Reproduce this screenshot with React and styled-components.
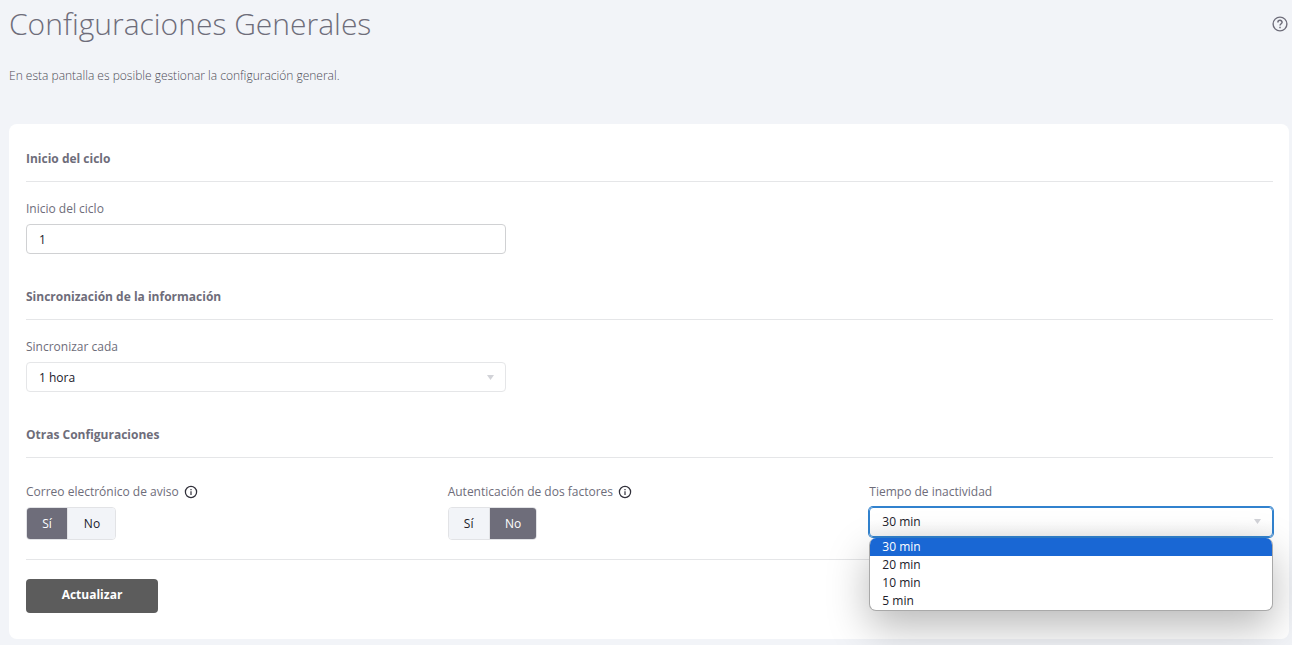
import React from "react";
import styled, { createGlobalStyle } from "styled-components";

const Global = createGlobalStyle`
  *, *::before, *::after { box-sizing: border-box; }
  body {
    margin: 0;
    background: #f2f4f8;
    color: #6e6d7a;
    font: 400 12px/18px "Open Sans", sans-serif;
  }
`;

const Page = styled.div`
  height: 645px;
  padding: 0 3px 0 9px;
  overflow: hidden;
`;

const Header = styled.header`
  display: flex;
  justify-content: space-between;
  height: 124px;
  padding-top: 4px;
`;

const Title = styled.h1`
  margin: 0;
  font-size: 30px;
  font-weight: 300;
  line-height: 40px;
  white-space: nowrap;
`;

const Intro = styled.p`
  margin: 23px 0 0;
  font-weight: 300;
  color: #4d4c57;
`;

const HelpIcon = styled.svg`
  width: 16px;
  height: 16px;
  margin: 12px 1px 0 0;
`;

const Card = styled.main`
  height: 515px;
  padding: 18px 16px 26px 17px;
  background: #fff;
  border-radius: 8px;
`;

const Section = styled.section`
  height: ${(p) => (p.$last ? "auto" : "138px")};
`;

const SectionTitle = styled.h2`
  height: 40px;
  margin: 0 0 ${(p) => p.$gap || 18}px;
  font-size: 12px;
  font-weight: 700;
  line-height: 34px;
  border-bottom: 1px solid #e5e6e8;
`;

const Label = styled.div`
  display: flex;
  align-items: center;
  height: 18px;
  margin-bottom: 6px;
  font-size: 12px;
  white-space: nowrap;
`;

const InfoIcon = styled.svg`
  width: 14px;
  height: 14px;
  margin-left: 5px;
`;

const Control = styled.div`
  position: relative;
  display: flex;
  align-items: center;
  justify-content: space-between;
  width: ${(p) => p.$width || "480px"};
  height: 30px;
  padding: ${(p) => (p.$focused ? 0 : 2)}px 11px 0 12px;
  color: #20202a;
  background: ${(p) => (p.$focused ? "linear-gradient(#fff 45%, #f4f4f4)" : "#fff")};
  border: 1px solid ${(p) => (p.$strong ? "#d0d1d3" : "#e5e6e8")};
  border-radius: 4px;
  ${(p) => p.$focused && "border-color: #3182ce; box-shadow: 0 0 0 1px #3182ce;"}
`;

const Caret = styled.svg`
  width: 7px;
  height: 5px;
  margin-bottom: 1px;
`;

const Columns = styled.div`
  display: grid;
  grid-template-columns: repeat(3, 1fr);
  column-gap: 18px;
  height: 57px;
`;

const Toggle = styled.div`
  display: inline-flex;
  height: 33px;
  border: 1px solid #e2e3e6;
  border-radius: 4px;
  overflow: hidden;
`;

const Option = styled.div`
  display: flex;
  align-items: center;
  justify-content: center;
  width: ${(p) => p.$width}px;
  color: ${(p) => (p.$on ? "#fff" : "#20202a")};
  background: ${(p) => (p.$on ? "#6e6d7a" : "#f2f4f8")};
  & + & { padding-left: 1px; border-left: 1px solid #e2e3e6; }
`;

const Menu = styled.ul`
  position: absolute;
  top: 30px;
  left: 0;
  right: 0;
  height: 73px;
  margin: 0 -1px;
  padding: 0;
  list-style: none;
  background: #fff;
  border: 1px solid #a9a9a9;
  border-top: 0;
  border-radius: 7px;
  overflow: hidden;
  box-shadow: 0 16px 42px rgba(0, 0, 0, 0.28);
`;

const MenuItem = styled.li`
  height: 18px;
  padding-left: 12px;
  line-height: 18px;
  color: ${(p) => (p.$selected ? "#fff" : "#20202a")};
  background: ${(p) => (p.$selected ? "#1967d4" : "transparent")};
`;

const Footer = styled.footer`
  margin-top: 19px;
  padding-top: 19px;
  border-top: 1px solid #e5e6e8;
`;

const Submit = styled.button`
  display: block;
  width: 132px;
  height: 34px;
  padding: 0 0 3px;
  color: #fff;
  background: #5c5c5c;
  border: 0;
  border-radius: 4px;
  font: 700 12px/18px "Open Sans", sans-serif;
`;

const Arrow = () => (
  <Caret viewBox="0 0 7 5"><path d="M0 0h7L3.5 5z" fill="#d2d3d8" /></Caret>
);

const Info = () => (
  <InfoIcon viewBox="0 0 14 14" fill="none" stroke="#31303a">
    <circle cx="7" cy="7" r="5.6" strokeWidth="1.25" />
    <path d="M7 6.2v3.7M7 4.1v1.2" strokeWidth="1.2" />
  </InfoIcon>
);

const YesNo = ({ value, widths }) => (
  <Toggle>
    <Option $on={value} $width={widths[0]}>Sí</Option>
    <Option $on={!value} $width={widths[1]}>No</Option>
  </Toggle>
);

const times = ["30 min", "20 min", "10 min", "5 min"];

export default function App() {
  return (
    <Page>
      <Global />
      <Header>
        <div>
          <Title>Configuraciones Generales</Title>
          <Intro>En esta pantalla es posible gestionar la configuración general.</Intro>
        </div>
        <HelpIcon viewBox="0 0 16 16" fill="none" stroke="#6e6d7a">
          <circle cx="8" cy="8" r="6.9" strokeWidth="1.4" />
          <path d="M5.9 6.4C5.9 3.7 10.1 3.7 10.1 6.3C10.1 7.8 8 7.8 8 9.6M8 10.8v1.4" strokeWidth="1.5" />
        </HelpIcon>
      </Header>
      <Card>
        <Section>
          <SectionTitle>Inicio del ciclo</SectionTitle>
          <Label>Inicio del ciclo</Label>
          <Control $strong>1</Control>
        </Section>
        <Section>
          <SectionTitle>Sincronización de la información</SectionTitle>
          <Label>Sincronizar cada</Label>
          <Control>1 hora<Arrow /></Control>
        </Section>
        <Section $last>
          <SectionTitle $gap={25}>Otras Configuraciones</SectionTitle>
          <Columns>
            <div>
              <Label>Correo electrónico de aviso<Info /></Label>
              <YesNo value={true} widths={[40, 48]} />
            </div>
            <div>
              <Label>Autenticación de dos factores<Info /></Label>
              <YesNo value={false} widths={[40, 47]} />
            </div>
            <div>
              <Label>Tiempo de inactividad</Label>
              <Control $focused $width="100%">
                30 min<Arrow />
                <Menu>
                  {times.map((t, i) => <MenuItem key={t} $selected={i === 0}>{t}</MenuItem>)}
                </Menu>
              </Control>
            </div>
          </Columns>
        </Section>
        <Footer><Submit>Actualizar</Submit></Footer>
      </Card>
    </Page>
  );
}
